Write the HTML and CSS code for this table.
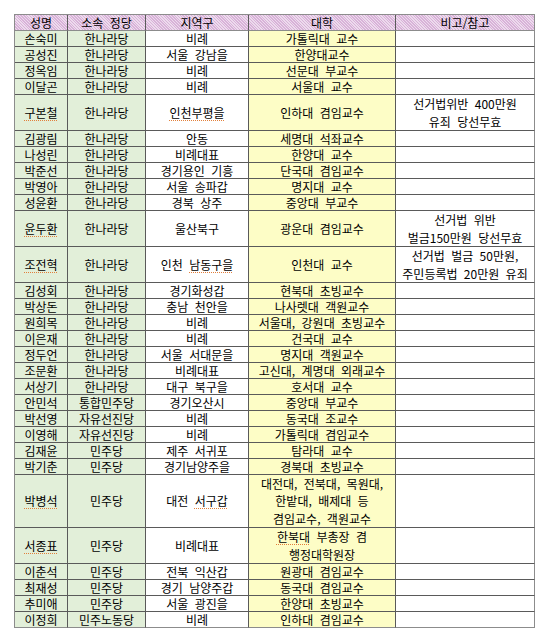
FILE: index.html
```html
<!DOCTYPE html>
<html lang="ko">
<head>
<meta charset="utf-8">
<title>국회의원 교수 출신</title>
<link rel="stylesheet" href="styles.css">
</head>
<body>
<table class="list">
  <thead>
    <tr class="head"><th>성명</th><th>소속 정당</th><th>지역구</th><th>대학</th><th>비고/참고</th></tr>
  </thead>
  <tbody>
    <tr><td class="g"><span class="sp">손숙미</span></td><td class="g">한나라당</td><td>비례</td><td class="y">가톨릭대 교수</td><td></td></tr>
    <tr><td class="g"><span class="sp">공성진</span></td><td class="g">한나라당</td><td>서울 강남을</td><td class="y">한양대교수</td><td></td></tr>
    <tr><td class="g"><span class="sp">정옥임</span></td><td class="g">한나라당</td><td>비례</td><td class="y">선문대 부교수</td><td></td></tr>
    <tr><td class="g">이달곤</td><td class="g">한나라당</td><td>비례</td><td class="y">서울대 교수</td><td></td></tr>
    <tr class="t2"><td class="g"><span class="sp">구본철</span></td><td class="g">한나라당</td><td><span class="sp">인천부평을</span></td><td class="y">인하대 겸임교수</td><td class="ml">선거법위반 400만원<br>유죄 당선무효</td></tr>
    <tr><td class="g"><span class="sp">김광림</span></td><td class="g">한나라당</td><td>안동</td><td class="y">세명대 석좌교수</td><td></td></tr>
    <tr><td class="g"><span class="sp">나성린</span></td><td class="g">한나라당</td><td>비례대표</td><td class="y">한양대 교수</td><td></td></tr>
    <tr><td class="g"><span class="sp">박준선</span></td><td class="g">한나라당</td><td><span class="sp">경기용인 기흥</span></td><td class="y">단국대 겸임교수</td><td></td></tr>
    <tr><td class="g">박영아</td><td class="g">한나라당</td><td>서울 <span class="sp">송파갑</span></td><td class="y">명지대 교수</td><td></td></tr>
    <tr><td class="g"><span class="sp">성윤환</span></td><td class="g">한나라당</td><td>경북 상주</td><td class="y">중앙대 부교수</td><td></td></tr>
    <tr class="t2"><td class="g"><span class="sp">윤두환</span></td><td class="g">한나라당</td><td>울산북구</td><td class="y">광운대 겸임교수</td><td class="ml">선거법 위반<br>벌금150만원 당선무효</td></tr>
    <tr class="t2"><td class="g"><span class="sp">조전혁</span></td><td class="g">한나라당</td><td>인천 <span class="sp">남동구을</span></td><td class="y">인천대 교수</td><td class="ml">선거법 벌금 50만원,<br>주민등록법 20만원 유죄</td></tr>
    <tr><td class="g"><span class="sp">김성회</span></td><td class="g">한나라당</td><td><span class="sp">경기화성갑</span></td><td class="y"><span class="sp">현북대</span> 초빙교수</td><td></td></tr>
    <tr><td class="g"><span class="sp">박상돈</span></td><td class="g">한나라당</td><td>충남 <span class="sp">천안을</span></td><td class="y">나사렛대 객원교수</td><td></td></tr>
    <tr><td class="g"><span class="sp">원희목</span></td><td class="g">한나라당</td><td>비례</td><td class="y">서울대, 강원대 초빙교수</td><td></td></tr>
    <tr><td class="g"><span class="sp">이은재</span></td><td class="g">한나라당</td><td>비례</td><td class="y">건국대 교수</td><td></td></tr>
    <tr><td class="g"><span class="sp">정두언</span></td><td class="g">한나라당</td><td>서울 <span class="sp">서대문을</span></td><td class="y">명지대 객원교수</td><td></td></tr>
    <tr><td class="g">조문환</td><td class="g">한나라당</td><td>비례대표</td><td class="y">고신대, 계명대 외래교수</td><td></td></tr>
    <tr><td class="g"><span class="sp">서상기</span></td><td class="g">한나라당</td><td>대구 <span class="sp">북구을</span></td><td class="y">호서대 교수</td><td></td></tr>
    <tr><td class="g">안민석</td><td class="g">통합민주당</td><td>경기오산시</td><td class="y">중앙대 부교수</td><td></td></tr>
    <tr><td class="g"><span class="sp">박선영</span></td><td class="g">자유선진당</td><td>비례</td><td class="y">동국대 조교수</td><td></td></tr>
    <tr><td class="g">이영해</td><td class="g">자유선진당</td><td>비례</td><td class="y">가톨릭대 겸임교수</td><td></td></tr>
    <tr><td class="g"><span class="sp">김재윤</span></td><td class="g">민주당</td><td>제주 서귀포</td><td class="y">탐라대 교수</td><td></td></tr>
    <tr><td class="g"><span class="sp">박기춘</span></td><td class="g">민주당</td><td><span class="sp">경기남양주을</span></td><td class="y">경북대 초빙교수</td><td></td></tr>
    <tr class="t3"><td class="g"><span class="sp">박병석</span></td><td class="g">민주당</td><td>대전 <span class="sp">서구갑</span></td><td class="y ml">대전대, 전북대, 목원대,<br>한밭대, 배제대 등<br>겸임교수, 객원교수</td><td></td></tr>
    <tr class="t2"><td class="g"><span class="sp">서종표</span></td><td class="g">민주당</td><td>비례대표</td><td class="y ml"><span class="sp">한북대</span> 부총장 겸<br>행정대학원장</td><td></td></tr>
    <tr><td class="g"><span class="sp">이춘석</span></td><td class="g">민주당</td><td>전북 <span class="sp">익산갑</span></td><td class="y">원광대 겸임교수</td><td></td></tr>
    <tr><td class="g"><span class="sp">최재성</span></td><td class="g">민주당</td><td>경기 <span class="sp">남양주갑</span></td><td class="y">동국대 겸임교수</td><td></td></tr>
    <tr><td class="g">추미애</td><td class="g">민주당</td><td>서울 <span class="sp">광진을</span></td><td class="y">한양대 초빙교수</td><td></td></tr>
    <tr><td class="g"><span class="sp">이정희</span></td><td class="g">민주노동당</td><td>비례</td><td class="y">인하대 겸임교수</td><td></td></tr>
  </tbody>
</table>
</body>
</html>
```
FILE: styles.css
```css
html, body {
  background: #ffffff;
}
body {
  margin: 14px;
  font-family: "Noto Sans CJK KR", "Noto Sans", sans-serif;
  font-size: 12px;
  color: #000000;
}
.list {
  display: grid;
  grid-template-columns: 53px 78px 103px 147px 139px;
  grid-template-rows:
    16px
    repeat(4, 16px) 36px
    repeat(5, 16px) 36px 36px
    repeat(12, 16px) 53px 36px
    repeat(4, 16px);
  width: max-content;
  border-top: 1px solid #8c8c8c;
  border-left: 1px solid #8c8c8c;
  border-collapse: separate;
  border-spacing: 0;
}
.list thead,
.list tbody,
.list tr {
  display: contents;
}
.list th,
.list td {
  box-sizing: border-box;
  display: block;
  padding: 0;
  border-right: 1px solid #5a5a5a;
  border-bottom: 1px solid #5a5a5a;
  line-height: 15px;
  text-align: center;
  white-space: nowrap;
  overflow: hidden;
  font-weight: normal;
  word-spacing: 3px;
  background: #ffffff;
}
.list tr > :last-child {
  border-right-color: #8c8c8c;
}
.list tr:last-child > * {
  border-bottom-color: #8c8c8c;
}
.list .head th {
  background-color: #e4c5e4;
  background-image: repeating-linear-gradient(45deg, #d8b2d8 0 1px, #eddbed 1px 2px);
}
.list .g { background: #e2efd9; }
.list .y { background: #fdfdc6; }
.list .t2 td { line-height: 35px; }
.list .t3 td { line-height: 52px; }
.list .t2 .ml { line-height: 17.5px; }
.list .t3 .ml { line-height: 17.33px; }

.sp {
  text-decoration: underline dotted #e2803c;
  text-decoration-thickness: 1px;
  text-underline-offset: 2px;
}
```
